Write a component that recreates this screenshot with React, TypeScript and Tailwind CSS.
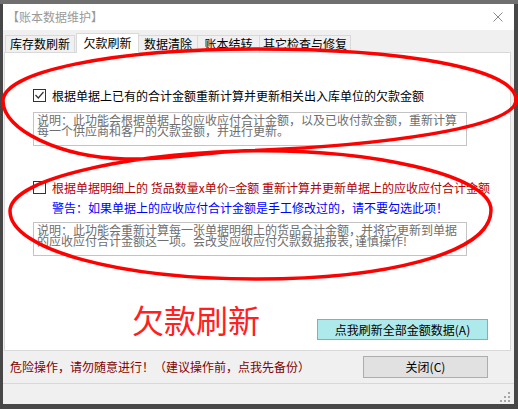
import React from "react";

function Box({ checked }: { checked?: boolean }) {
  return (
    <div className="w-[13px] h-[13px] border border-[#333333] bg-white shrink-0 flex">
      {checked && (
        <svg width="11" height="11" viewBox="0 0 11 11">
          <path d="M1.5 5 L4.3 8 L9.5 2" fill="none" stroke="#333333" strokeWidth="1.2" />
        </svg>
      )}
    </div>
  );
}

export default function App() {
  return (
    <div className="relative w-[518px] h-[409px] bg-[#474747] flex flex-col font-['Noto_Sans_CJK_SC','Noto_Sans',sans-serif] text-[12px] overflow-hidden">
      <div className="h-[4px] bg-[#6f6f6f] shrink-0" />
      <div className="ml-[3px] w-[511px] h-[400px] flex flex-col bg-[#f0f0f0]">
        {/* title bar */}
        <div className="h-[26px] bg-white flex items-center justify-between pl-[4px] pr-[11px] shrink-0">
          <span className="text-[#9a9a9a] leading-[14px]">【账本数据维护】</span>
          <svg width="10" height="10" viewBox="0 0 10 10">
            <path d="M0.5 0.5L9.5 9.5M9.5 0.5L0.5 9.5" stroke="#8a8a8a" strokeWidth="1" />
          </svg>
        </div>
        {/* tabs */}
        <div className="h-[22px] flex items-end pl-[2px] shrink-0 text-black">
          <div className="w-[70px] h-[17px] border-t border-l border-r border-[#d9d9d9] flex items-center justify-center leading-[14px]">库存数刷新</div>
          <div className="ml-[1px] w-[63px] h-[20px] -mb-[1px] relative z-10 bg-white border-t border-l border-r border-[#d9d9d9] flex items-center justify-center pb-[2px] leading-[14px]">欠款刷新</div>
          <div className="w-[59px] h-[17px] border-t border-r border-[#d9d9d9] flex items-center justify-center leading-[14px]">数据清除</div>
          <div className="w-[62px] h-[17px] border-t border-r border-[#d9d9d9] flex items-center justify-center leading-[14px]">账本结转</div>
          <div className="w-[91px] h-[17px] border-t border-r border-[#d9d9d9] flex items-center justify-center leading-[14px]">其它检查与修复</div>
        </div>
        {/* panel */}
        <div className="ml-[1px] w-[507px] h-[299px] bg-white border border-[#d9d9d9] flex flex-col shrink-0">
          <div className="mt-[36px] ml-[28px] h-[13px] flex items-center">
            <Box checked />
            <span className="ml-[6px] text-black leading-[14px] whitespace-nowrap">根据单据上已有的合计金额重新计算并更新相关出入库单位的欠款金额</span>
          </div>
          <div className="mt-[10px] ml-[28px] w-[434px] h-[34px] border border-[#c4c4c4] text-[#6e6e6e] leading-[11px] pl-[3px] pt-[1px] whitespace-nowrap">
            说明：此功能会根据单据上的应收应付合计金额，以及已收付款金额，重新计算
            <br />
            每一个供应商和客户的欠款金额，并进行更新。
          </div>
          <div className="mt-[35px] ml-[28px] h-[13px] flex items-center">
            <Box />
            <span className="ml-[6px] text-[#b30000] leading-[14px] whitespace-nowrap">根据单据明细上的 货品数量x单价=金额 重新计算并更新单据上的应收应付合计金额</span>
          </div>
          <div className="mt-[7px] ml-[47px] text-[#0000ff] leading-[14px] whitespace-nowrap">警告：如果单据上的应收应付合计金额是手工修改过的，请不要勾选此项！</div>
          <div className="mt-[7px] ml-[28px] w-[434px] h-[34px] border border-[#c4c4c4] text-[#6e6e6e] leading-[11px] pl-[3px] pt-[1px] whitespace-nowrap">
            说明：此功能会重新计算每一张单据明细上的货品合计金额，并将它更新到单据
            <br />
            的应收应付合计金额这一项。会改变应收应付欠款数据报表, 谨慎操作!
          </div>
          <div className="mt-[43px] flex items-start justify-between pl-[127px] pr-[22px]">
            <span className="text-[32px] leading-[40px] text-[#ff2020]">欠款刷新</span>
            <div className="mt-[20px] w-[171px] h-[21px] bg-[#aeeaec] border border-[#a3a3a3] text-black leading-[14px] flex items-center justify-center">点我刷新全部金额数据(A)</div>
          </div>
        </div>
        {/* bottom row */}
        <div className="h-[32px] flex items-center justify-between pl-[7px] pr-[26px] shrink-0">
          <span className="text-[#800000] leading-[14px]">危险操作，请勿随意进行！（建议操作前，点我先备份）</span>
          <div className="w-[125px] h-[22px] bg-[#e1e1e1] border border-[#adadad] text-black leading-[14px] flex items-center justify-center">关闭(C)</div>
        </div>
        {/* status bar */}
        <div className="h-[21px] border-t border-[#d8d8d8] flex justify-end items-end pr-[3px] pb-[1px] shrink-0">
          <svg width="11" height="11" viewBox="0 0 11 11">
            <rect x="8" y="0" width="2" height="2" fill="#a6a6a6" />
            <rect x="4" y="4" width="2" height="2" fill="#a6a6a6" />
            <rect x="8" y="4" width="2" height="2" fill="#a6a6a6" />
            <rect x="0" y="8" width="2" height="2" fill="#a6a6a6" />
            <rect x="4" y="8" width="2" height="2" fill="#a6a6a6" />
            <rect x="8" y="8" width="2" height="2" fill="#a6a6a6" />
          </svg>
        </div>
      </div>
      {/* hand-drawn red annotation */}
      <svg className="absolute left-0 top-0 pointer-events-none" width="518" height="409" viewBox="0 0 518 409">
        <path
          d="M 240 151 C 380 146 516 128 516 100 C 516 68 400 49 258 49 C 110 49 3 72 3 101 C 3 130 60 157 125 159 C 170 160 200 153 240 151 C 370 148 491 175 491 210 C 491 255 380 279 258 279 C 120 279 10 250 10 211 C 10 180 120 155 240 151 Z"
          fill="none"
          stroke="#ff0000"
          strokeWidth="3.5"
          strokeLinejoin="round"
        />
      </svg>
    </div>
  );
}
